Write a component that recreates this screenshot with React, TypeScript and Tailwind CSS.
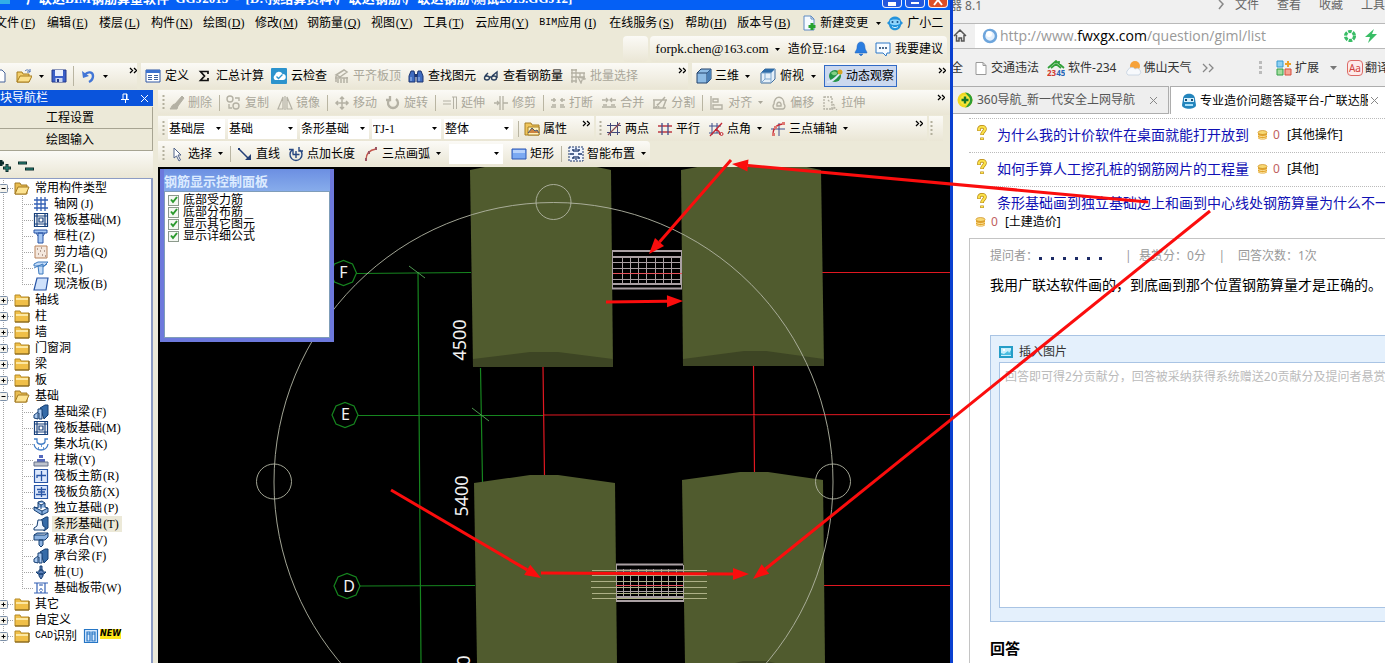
import React from "react";

type Kids = { children?: React.ReactNode };

const Svg = ({ children, w = 16, h = 16 }: Kids & { w?: number; h?: number }) => (
  <svg width={w} height={h} viewBox={`0 0 ${w} ${h}`} fill="none" className="shrink-0" aria-hidden="true">
    {children}
  </svg>
);

const Caret = ({ color = "#000" }: { color?: string }) => (
  <Svg w={5} h={3}>
    <path d="M0 0h5L2.500 3z" fill={color} />
  </Svg>
);

const More = () => (
  <button aria-label="更多" className="flex h-4 w-2 shrink-0 items-start">
    <Svg w={8} h={8}>
      <path d="M1 1l2.500 2.500L1 6M5 1l2.500 2.500L5 6" stroke="#000" strokeWidth="1.300" />
    </Svg>
  </button>
);

const Grip = () => (
  <Svg w={3} h={18}>
    <path d="M1.500 1v16" stroke="#b3b09d" strokeWidth="2" strokeDasharray="2 2" />
  </Svg>
);

const Sep = () => <span className="-ml-px -mr-0.5 h-4 w-px shrink-0 bg-[#b9b5a2]" />;

/* Leading Latin abbreviations (BIM, CAD) are set in the half-width face. */
const Label = ({ text }: { text: string }) => {
  const latin = text.match(/^[A-Z]+/)?.[0] ?? "";
  return (
    <>
      {latin && <span className="font-['Liberation_Mono'] text-[10px]">{latin}</span>}
      {text.slice(latin.length)}
    </>
  );
};

const G = "#b4b1a4";
const icons: Record<string, React.ReactNode> = {
  page: <path d="M-6 2h8l3 3v9h-11z" fill="#fff" stroke="#47639a" />,
  open: (
    <>
      <path d="M1 4h5l1 2h6v8H1z" fill="#f3cf6b" stroke="#a77d1d" />
      <path d="M4 8h12l-3 6H1z" fill="#fbe08c" stroke="#a77d1d" />
      <path d="M9 3c2-2 4-1 5 1m0-3v3h-3" stroke="#4a70b5" />
    </>
  ),
  save: (
    <>
      <path d="M1 2h14v12H1z" fill="#3a5fc8" stroke="#22388a" />
      <path d="M4 2h8v6H4z" fill="#e8eefb" />
      <path d="M4.500 10h7v4h-7z" fill="#c9d6f2" />
      <path d="M6 11h2v3H6z" fill="#22388a" />
    </>
  ),
  undo: (
    <>
      <path d="M4 6.500C7 3 12 4 12 8c0 3-2 5-4 6" stroke="#4376d6" strokeWidth="2.400" />
      <path d="M1 3l1 7 6-2z" fill="#4376d6" />
    </>
  ),
  define: (
    <>
      <path d="M1 2h14v12H1z" fill="#fff" stroke="#2f57a5" />
      <path d="M1 2h14v3H1z" fill="#3c72cf" />
      <path d="M3 7.500h4M3 9.500h4M3 11.500h4M9 7.500h4M9 9.500h4M9 11.500h4" stroke="#3c5f9d" />
    </>
  ),
  sum: <path d="M12 6V3.500H4.500L8.500 8l-4 4.500H12V10" stroke="#111" strokeWidth="1.700" />,
  cloud: (
    <>
      <rect width="16" height="16" rx="1" fill="#2c93cd" />
      <path d="M4 12a3 3 0 010-5 4 4 0 017.500-1A3 3 0 0112 12z" fill="#fff" />
      <path d="M5.500 8.500l2 2 4-4" stroke="#2c93cd" strokeWidth="1.300" />
    </>
  ),
  flush: <path d="M2 7l8-5 3 2-7 5zM2 8v6M4 11v4M7 11v4M10 10v5M13 9v6M1 10h13" stroke={G} strokeWidth="1.500" />,
  find: (
    <>
      <path d="M3 3h3l1 5v6H1V8zM10 3h3l2 5v6H9V8z" fill="#3f6cc0" stroke="#1c3570" />
      <path d="M6.500 6h3v3h-3z" fill="#1c3570" />
      <path d="M3 9v4M11 9v4" stroke="#a9c5f3" />
    </>
  ),
  glasses: <path d="M2 8l3-3M9 8l5-4v6M1.500 10a2.500 2 0 105 0 2.500 2 0 10-5 0zM8.500 10a2.500 2 0 105 0 2.500 2 0 10-5 0zM6 9h3" stroke="#29405f" strokeWidth="1.400" />,
  batch: <path d="M1 2h6M1 5h14M1 9h14M1 13h6M2 1v14M6 1v14M10 5v5M14 5v5M8 9l3 6 1-3 3-1z" stroke={G} strokeWidth="1.300" />,
  cube: (
    <>
      <path d="M1 5l4-4h10v10l-4 4H1z" fill="#8dbbe4" stroke="#22436c" />
      <path d="M1 5h10v10M11 5l4-4" stroke="#22436c" />
      <path d="M11 5l4-4v10l-4 4z" fill="#4b7fb4" />
    </>
  ),
  topview: (
    <>
      <path d="M1 5l4-4h10v10l-4 4H1z" fill="#e5f0f9" stroke="#3f6d9c" />
      <path d="M1 5l4-4h10l-4 4z" fill="#2e6da9" />
      <path d="M1 5h10v10M11 5l4-4M5 5v6h6M1 15l4-4" stroke="#7fa8cf" />
    </>
  ),
  orbit: (
    <>
      <circle cx="8" cy="8" r="6" fill="#239447" />
      <path d="M4 5c2-2 5-2 6 0s-4 4-6 0z" fill="#83d184" />
      <path d="M0 14C5 14 13 7 15 2" stroke="#dce9f6" strokeWidth="2" />
      <circle cx="13" cy="4" r="2.500" fill="#d6a527" />
    </>
  ),
  newdoc: (
    <>
      <path d="M3 1h7l3 3v11H3z" fill="#f5faff" stroke="#5f8ac2" />
      <path d="M10 1v3h3" stroke="#5f8ac2" />
      <path d="M11 8v7M7.500 11.500h7" stroke="#28a22e" strokeWidth="3" />
    </>
  ),
  mascot: (
    <>
      <path d="M2 6C3 0 13 0 14 6l2 2-2 2c-1 7-11 7-12 0L0 8z" fill="#2493dc" />
      <path d="M3 5.500C5 4 11 4 13 5.500v3c-2 2-8 2-10 0z" fill="#8fd4fb" />
      <circle cx="5.500" cy="7" r="1" fill="#104c86" />
      <circle cx="10.500" cy="7" r="1" fill="#104c86" />
      <path d="M5 11.500c2 1.500 4 1.500 6 0" stroke="#d8f2ff" />
    </>
  ),
  bell: <path d="M8 1c3 0 4 3 4 6 0 2 2 3 2 5H2c0-2 2-3 2-5 0-3 1-6 4-6zM6 13h4l-2 2z" fill="#2a7de0" stroke="#1c61bb" strokeWidth=".5" />,
  chat: (
    <>
      <path d="M1 2h14v10h-3l-1 3-3-3H1z" fill="#f6fbff" stroke="#2c79c8" />
      <path d="M4 7h2M7 7h2M10 7h2" stroke="#173e68" strokeWidth="1.500" />
    </>
  ),
  erase: <path d="M13 1l2 2-6 8-3-2zM6 9c-3 0-3 3-5 5h7l1-3" fill={G} stroke={G} />,
  copy: <path d="M1 4a3 3 0 106 0 3 3 0 10-6 0M7 11a3 3 0 106 0 3 3 0 10-6 0M9 3h4v3M3 9v4h3" stroke={G} strokeWidth="1.400" />,
  mirror: <path d="M6 2v12H1zM10 2v12h5zM8 1v14" stroke={G} strokeWidth="1.200" />,
  move: <path d="M8 2v12M2 8h12M6 4l2-2 2 2M6 12l2 2 2-2M4 6L2 8l2 2M12 6l2 2-2 2" stroke={G} strokeWidth="1.500" />,
  rotate: <path d="M5 4a5 5 0 106 0M5 1v4H1" stroke={G} strokeWidth="2.300" />,
  extend: <path d="M1 6h8M1 9h8M11.500 2v12M14.500 2v12M10 2h5" stroke={G} />,
  trim: <path d="M1 8h5M10 8h5M7 1v14M10 1v14M4 6l2 2-2 2" stroke={G} strokeWidth="1.300" />,
  split: <path d="M1 5h5M10 5h5M1 12h5M10 12h5M4 3v4M12 3v4M2 10h4M10 10h4" stroke={G} strokeWidth="1.500" />,
  merge: <path d="M1 5h6M9 5h6M1 12h14M5 3l2 2-2 2M11 3L9 5l2 2M2 10h4M10 10h4" stroke={G} strokeWidth="1.300" />,
  divide: <path d="M1 5h14M1 13h13M13 2L3 13M2 5v8M14 5l-3 8M5 9l2 3" stroke={G} strokeWidth="1.500" />,
  align: <path d="M2 1v14M4 4h5v3H4zM4 10h9v4H4z" stroke={G} strokeWidth="1.400" />,
  offset: <path d="M4 14a3 3 0 01-1-5c0-9 10-9 10 0a3 3 0 01-1 5zM6 11c-1-5 5-5 4 0z" stroke={G} strokeWidth="1.400" />,
  stretch: <path d="M2 2h8v12H2zM6 5l2 2M9 7l3 3v4H7M12 12l3 3" stroke={G} strokeDasharray="2 1" strokeWidth="1.300" />,
  props: (
    <>
      <path d="M1 2h6l1 2h7v10H1z" fill="#f1c65c" stroke="#a67e25" />
      <path d="M4 6h11v8H4z" fill="#fff2bc" stroke="#a67e25" />
      <path d="M4 12l4-5 3 3 2-1 2 3" fill="#ce8441" stroke="#465a75" />
    </>
  ),
  two: (
    <>
      <path d="M1 4.500h14M1 11.500h13M4.500 2v13M11.500 1v13" stroke="#41497c" />
      <path d="M2 14L14 2" stroke="#8b4a52" strokeWidth="1.300" />
    </>
  ),
  parallel: (
    <>
      <path d="M1 5h14M1 11h14" stroke="#bf3a43" strokeWidth="1.300" />
      <path d="M5 2v12M11 2v12" stroke="#3f4e8c" strokeWidth="1.300" />
    </>
  ),
  angle: (
    <>
      <path d="M1 5h12M1 12h11M4 2v12M9 2v10" stroke="#3f4e8c" />
      <path d="M2 15L14 2M7 9c3 0 5 2 5 5" stroke="#c42936" strokeWidth="1.300" />
      <circle cx="13.500" cy="13" r="1.500" stroke="#c42936" />
    </>
  ),
  aux: (
    <>
      <path d="M1 8h14M9 2v13" stroke="#3f4e8c" />
      <path d="M3 14C3 7 7 3 14 3" stroke="#c42936" strokeWidth="1.300" />
      <path d="M2 12h3v3H2zM4 5h3v3H4zM12 1h3v3h-3z" fill="#df7770" />
    </>
  ),
  cursor: <path d="M5 2v10l2.500-2L10 15l1.500-1L9 9h3z" fill="#fff" stroke="#51648b" />,
  line: (
    <>
      <path d="M2 3l10 10" stroke="#243f76" strokeWidth="1.500" />
      <path d="M1 2h2v2H1zM8 14h6V8z" fill="#243f76" />
    </>
  ),
  length: <path d="M4 4a6 6 0 108 0M1 3.500h4V8M8 5v7M4.500 8.500h7M11 1v4h4" stroke="#274781" strokeWidth="1.400" />,
  arc: (
    <>
      <path d="M3 14C3 8 6 4 13 3" stroke="#c3564b" strokeWidth="1.400" />
      <path d="M2 12h2v3H2zM5 5h2v3H5zM12 1h2v3h-2z" fill="#9b5664" />
    </>
  ),
  rect: (
    <>
      <path d="M1 3h14v10H1z" fill="#7ba9f2" stroke="#2d56b4" />
      <path d="M2 4h12v3H2z" fill="#b6d1fb" />
    </>
  ),
  smart: (
    <>
      <path d="M1 1h14v14H1z" fill="#eef4ff" stroke="#1c376c" strokeDasharray="2 1" />
      <path d="M8 2v4M8 10v4M2 8h4M10 8h4M4 4h2v2M12 4h-2v2M4 12h2v-2M12 12h-2v-2" stroke="#1c376c" strokeWidth="1.300" />
    </>
  ),
  folder: (
    <>
      <path d="M1 3h5l1 2h8v9H1z" fill="#f0bf48" stroke="#b58a27" />
      <path d="M2 6h12v2H2z" fill="#fce8a4" />
      <path d="M1 14h14V5" stroke="#7d5f1d" />
    </>
  ),
  folderOpen: (
    <>
      <path d="M1 3h5l1 2h6v9H1z" fill="#e9bd51" stroke="#a47b22" />
      <path d="M4 7h11l-3 7H1z" fill="#fde391" stroke="#a47b22" />
    </>
  ),
  grid: <path d="M4 1v14M8 1v14M12 1v14M1 4h14M1 8h12M1 12h14" stroke="#3460b4" strokeWidth="1.300" />,
  raft: <path d="M1.500 1.500h13v13h-13zM4 1v14M12 1v14M1 4h14M1 12h14M6 6h4v4H6z" stroke="#163f7b" strokeWidth="1.200" />,
  column: <path d="M1 2h13v3H1zM5 5h5v10H5zM3 5l2 3M12 5l-2 3" fill="#a7c8f4" stroke="#2855a6" />,
  wall: (
    <>
      <path d="M2 2h12v12H2z" fill="#f4e8de" stroke="#b8835c" />
      <path d="M4 5h1M8 4h1M11 7h1M5 10h1M9 11h1M7 7h1M12 12h1" stroke="#775544" />
    </>
  ),
  beam: <path d="M1 4l4-2h10l-4 4H1zM5 6l5-2v10H6zM10 7l4-3M1 8l4-2" fill="#c4dcf8" stroke="#3c7abf" />,
  slab: <path d="M4 2h11l-2 12H1z" fill="#cfe1fb" stroke="#2855a6" strokeWidth="1.200" />,
  strip: (
    <>
      <path d="M8 4l5-3h2v11l-4 3z" fill="#356ba8" stroke="#153e72" />
      <path d="M1 14h11v-3l-2-1-1-6H5l-1 6-3 2z" fill="#edf5ff" stroke="#153e72" />
    </>
  ),
  fbeam: (
    <>
      <path d="M7 4l5-3h3v10l-4 4z" fill="#356ba8" stroke="#153e72" />
      <path d="M1 14v-3l4-3V5h4v10H6V9H5v6z" fill="#a9c8ef" stroke="#153e72" />
    </>
  ),
  pit: <path d="M1 3h3v3c1 3 7 3 8 0V3h3M1 8c1 8 13 8 14 0M5 12h1M8 10h1M10 12h1" stroke="#417dc6" strokeWidth="1.300" />,
  pier: (
    <>
      <path d="M6 3h4v3H6zM4 7h8v3H4z" fill="#5569bd" />
      <path d="M1 10h14v4H1z" fill="#bfc4ce" stroke="#65718b" />
    </>
  ),
  main: (
    <>
      <path d="M1.500 1.500h13v13h-13z" fill="#dce8fc" stroke="#2855a6" strokeWidth="1.200" />
      <path d="M8.500 3v10M4 10V7.500h9" stroke="#2855a6" strokeWidth="1.300" />
    </>
  ),
  neg: (
    <>
      <path d="M1.500 1.500h13v13h-13z" fill="#dce8fc" stroke="#2855a6" strokeWidth="1.200" />
      <path d="M8.500 3v10M4 5.500h9M3 10.500h10M5 8h7" stroke="#2855a6" strokeWidth="1.300" />
    </>
  ),
  isolated: <path d="M5 2l4-1 3 2v4l3 1v4l-6 3-8-5V7l4 1zM5 3l3 2 4-2M8 5v4M1 7l8 4 6-3M9 11v4" fill="#8bb2e1" stroke="#153e72" />,
  cap: <path d="M1 3l3-2h11v4l-3 3H1zM1 3h11l3-2M6 8h4v5l-2 2-2-2z" fill="#8bb2e1" stroke="#153e72" />,
  pile: <path d="M7 2h2v4H7zM6 6h4v2h3l-2 2H5L3 8h3zM6 10h4v2l-2 3-2-3z" fill="#5f82ba" stroke="#153e72" />,
  band: <path d="M1 3h14M1 13h14M4 3v10M12 3v10M8 4v2M8 8v2M8 11v2M6 5h1M9 5h1M6 10h1M9 10h1" stroke="#3460b4" strokeWidth="1.200" />,
  cad: <path d="M1.500 1.500h13v13h-13zM4 4h3v9H4zM9 4h3v9H9zM4 6h3M9 6h3" fill="#dcecff" stroke="#2676c5" strokeWidth="1.200" />,
};

const Icon = ({ name }: { name: string }) => <Svg>{icons[name]}</Svg>;

const Tool = ({ icon, text, off, menu, gap = "gap-[3px]" }: { icon: string; text: string; off?: boolean; menu?: boolean; gap?: string }) => (
  <button className={`flex shrink-0 items-center whitespace-nowrap ${gap} ${off ? "text-[#aaa79a]" : "text-black"}`}>
    <Icon name={icon} />
    {text}
    {menu && (
      <span className="pl-[3px]">
        <Caret color={off ? "#aaa79a" : "#000"} />
      </span>
    )}
  </button>
);

const Combo = ({ label, value, width }: { label: string; value: string; width: string }) => (
  <span className={`relative flex h-5 shrink-0 items-center bg-white ${width}`}>
    <select aria-label={label} className="h-5 w-full appearance-none bg-transparent pl-px text-xs outline-none">
      <option>{value}</option>
    </select>
    <span className="pointer-events-none absolute right-1 top-2 flex">
      <Caret />
    </span>
  </span>
);

const band = "bg-linear-to-b from-[#fbfaf6] to-[#eae6d5]";

const menus: [string, string][] = [
  ["文件", "F"], ["编辑", "E"], ["楼层", "L"], ["构件", "N"], ["绘图", "D"], ["修改", "M"], ["钢筋量", "Q"],
  ["视图", "V"], ["工具", "T"], ["云应用", "Y"], ["BIM应用", "I"], ["在线服务", "S"], ["帮助", "H"], ["版本号", "B"],
];

const Menu = ({ text, k }: { text: string; k: string }) => (
  <button className="flex shrink-0 whitespace-nowrap">
    <Label text={text} />
    <span className="w-[18px] text-center">
      (<u>{k}</u>)
    </span>
  </button>
);

type Node = { text: string; icon: string; k?: string; open?: boolean; child?: boolean; last?: boolean; on?: boolean };
const tree: Node[] = [
  { text: "常用构件类型", icon: "folderOpen", open: true },
  { text: "轴网", k: "J", icon: "grid", child: true },
  { text: "筏板基础", k: "M", icon: "raft", child: true },
  { text: "框柱", k: "Z", icon: "column", child: true },
  { text: "剪力墙", k: "Q", icon: "wall", child: true },
  { text: "梁", k: "L", icon: "beam", child: true },
  { text: "现浇板", k: "B", icon: "slab", child: true, last: true },
  { text: "轴线", icon: "folder" },
  { text: "柱", icon: "folder" },
  { text: "墙", icon: "folder" },
  { text: "门窗洞", icon: "folder" },
  { text: "梁", icon: "folder" },
  { text: "板", icon: "folder" },
  { text: "基础", icon: "folderOpen", open: true },
  { text: "基础梁", k: "F", icon: "fbeam", child: true },
  { text: "筏板基础", k: "M", icon: "raft", child: true },
  { text: "集水坑", k: "K", icon: "pit", child: true },
  { text: "柱墩", k: "Y", icon: "pier", child: true },
  { text: "筏板主筋", k: "R", icon: "main", child: true },
  { text: "筏板负筋", k: "X", icon: "neg", child: true },
  { text: "独立基础", k: "P", icon: "isolated", child: true },
  { text: "条形基础", k: "T", icon: "strip", child: true, on: true },
  { text: "桩承台", k: "V", icon: "cap", child: true },
  { text: "承台梁", k: "F", icon: "fbeam", child: true },
  { text: "桩", k: "U", icon: "pile", child: true },
  { text: "基础板带", k: "W", icon: "band", child: true, last: true },
  { text: "其它", icon: "folder" },
  { text: "自定义", icon: "folder" },
  { text: "CAD识别", icon: "folder" },
];

const TreeRow = ({ n }: { n: Node }) => (
  <li className="flex h-4 items-center whitespace-nowrap">
    {n.child ? (
      <Svg w={33} h={16}>
        <path d={`M3.500 0v16M22.500 0v${n.last ? 8 : 16}M22 8.500h11`} stroke="#a5a5a5" strokeDasharray="1 1" />
      </Svg>
    ) : (
      <Svg w={14} h={16}>
        <path d="M3.500 0v16M8 8.500h6" stroke="#a5a5a5" strokeDasharray="1 1" />
        <rect x="-.5" y="4.500" width="8" height="8" rx="1" fill="#f5f3ec" stroke="#7b8fa8" />
        <path d={n.open ? "M1.500 8.500h4" : "M1.500 8.500h4M3.500 6.500v4"} stroke="#000" />
      </Svg>
    )}
    <Icon name={n.icon} />
    <span className={`ml-[3px] flex px-0.5 leading-4 ${n.on ? "bg-[#ece9d8]" : ""}`}>
      <Label text={n.text} />
      {n.k && <span className="w-[18px] text-center">({n.k})</span>}
    </span>
    {n.text === "CAD识别" && (
      <>
        <span className="w-1" />
        <Icon name="cad" />
        <b className="mb-1 ml-px h-[10px] bg-[#ffe81a] font-['DejaVu_Sans'] text-[8px] italic leading-[10px]">NEW</b>
      </>
    )}
  </li>
);

const Nav = () => (
  <aside className="flex w-[158px] shrink-0 flex-col overflow-hidden pr-[5px]">
    <header className="flex h-4 shrink-0 items-center bg-[#0a54dc] text-white">
      <span className="flex-1">块导航栏</span>
      <button aria-label="固定" className="mr-2.5">
        <Svg w={9} h={10}>
          <path d="M2 6V1h4v5M0 6.500h8M4.500 7v3M5.500 1v5" stroke="#fff" />
        </Svg>
      </button>
      <button aria-label="关闭" className="mr-1">
        <Svg w={9} h={9}>
          <path d="M1 1l7 7M8 1L1 8" stroke="#fff" />
        </Svg>
      </button>
    </header>
    <button className="mt-px h-[22px] shrink-0 border-b border-r border-[#a7a492] pr-3">工程设置</button>
    <button className="h-[22px] shrink-0 border-b border-r border-[#a7a492] pr-3">绘图输入</button>
    <div className={`flex h-[27px] shrink-0 items-center ${band}`}>
      <Svg w={36} h={16}>
        <path d="M-2 6h6M1 3v6M3 11h8M7 7v8M18 6h9M25 12h9" stroke="#0c2c2c" strokeWidth="3" />
        <path d="M4 11h6M7 8v6M26 12h7M19 6h7" stroke="#2c9384" />
      </Svg>
    </div>
    <ul className="min-h-0 flex-1 overflow-hidden border-r-2 border-t border-[#8d9cc4] bg-white pt-px">
      {tree.map((n, i) => (
        <TreeRow key={i} n={n} />
      ))}
    </ul>
  </aside>
);

const Scene = () => (
  <svg viewBox="158 167 792 496" preserveAspectRatio="xMidYMid slice" className="h-full w-full" fill="none">
    <g stroke="#16851f" strokeWidth="1.200">
      <path d="M356 273.500L471 272.500M358 415.500H543M359 586L475 585.500M418 272L421 663M480.500 368L482.500 482" />
      <path d="M409 266l16 12M472 408l17 13" stroke="#4e9950" strokeWidth="1" />
      {[[343.5, 273], [345, 415], [347, 586]].map(([x, y]) => (
        <polygon key={y} points={`${x - 13},${y} ${x - 9},${y - 9} ${x},${y - 12.5} ${x + 9},${y - 9} ${x + 13},${y} ${x + 9},${y + 9} ${x},${y + 12.5} ${x - 9},${y + 9}`} />
      ))}
    </g>
    <path d="M822 272.500H950M543 415L950 414.500M824 585.500H950M543 367L544.500 476M753.500 366L754.500 473" stroke="#e01821" strokeWidth="1.200" />
    <g fill="#505b2e">
      <path d="M470 170l20-4h102l19 4 2 197H473z" />
      <path d="M681 170l22-4h99l19 4 3 196H683z" />
      <path d="M474 483l56-8h28l57 8 2 180H477z" />
      <path d="M682 480l58-8h28l55 8 2 183H685z" />
    </g>
    <path d="M473 359l57-7h28l55 7v8H473zM683 359l61-8h22l58 8v7H683zM735 663l8-2h24l8 2z" fill="#3d4524" />
    <g stroke="#aaa0a3">
      <path d="M612 251h70M613 257h69M612 284h70M612 288.500h70" strokeWidth="2" />
      <path d="M612.500 251v38M681.500 251v38M613 262.500h69M613 268.500h69M613 279.500h69M622.500 257v28M630.500 257v28M638.500 257v28M646.500 257v28M655.500 257v28M663.500 257v28M671.500 257v28M680.500 257v28" />
      <path d="M616 564.500h67M616 570.500h67M616 597h67M616 601h68" strokeWidth="2" />
      <path d="M616 581.500h68M616 591.500h68M616.500 565v36M623.500 569v29M630.500 569v29M638.500 569v29M646.500 569v29M653.500 569v29M661.500 569v29M668.500 569v29M676.500 569v29M683.500 565v36" />
    </g>
    <path d="M613 273.500h69M616 585.500h67" stroke="#e8515a" />
    <path d="M592 570.500h115M592 575.500h115M591 581.500h116M591 587.500h116M592 593.500h115M592 598.500h115" stroke="#aeb187" />
    <g stroke="#b2b5a4" strokeWidth=".9">
      <circle cx="553.5" cy="482" r="279.5" />
      <circle cx="553.5" cy="202" r="17.500" />
      <circle cx="274" cy="481.5" r="17.500" />
      <circle cx="833" cy="481.5" r="17.500" />
    </g>
    <g fill="#f2f2f2" className="font-['Noto_Sans'] text-[16px]" textAnchor="middle">
      <text x="343.500" y="278">F</text>
      <text x="345.500" y="420">E</text>
      <text x="349" y="592">D</text>
    </g>
    <g fill="#f2f2f2" className="font-['Noto_Sans'] text-[18px]" textAnchor="middle">
      <text transform="translate(466 340) rotate(-90)">4500</text>
      <text transform="translate(468 496) rotate(-90)">5400</text>
      <text transform="translate(470 676) rotate(-90)">3000</text>
    </g>
  </svg>
);

const RebarPanel = () => (
  <section className="absolute left-0.5 top-0.5 flex h-[173px] w-[174px] flex-col border-4 border-t-0 border-[#6d79dc] bg-[#7c9fe6]">
    <h2 className="h-[22px] shrink-0 bg-linear-to-b from-[#6c8fe2] to-[#87aceb] text-[13px] font-bold leading-[25px] text-[#dcebff]">钢筋显示控制面板</h2>
    <div className="flex-1 border border-[#7f9db9] bg-white pl-[3px] pt-0.5">
      {["底部受力筋", "底部分布筋", "显示其它图元", "显示详细公式"].map((t) => (
        <label key={t} className="relative flex h-3 items-center gap-1 leading-3">
          <input type="checkbox" defaultChecked className="h-[11px] w-[11px] appearance-none border border-[#8c9a8c] bg-[#f4f8f2]" />
          <span className="pointer-events-none absolute left-0.5 top-0.5 flex">
            <Svg w={8} h={8}>
              <path d="M1 3.500L3 6l4-5" stroke="#2b9a2d" strokeWidth="2" />
            </Svg>
          </span>
          {t}
        </label>
      ))}
    </div>
  </section>
);

const winBtn = "flex h-2 w-5 justify-center rounded-b-[4px] border border-t-0 border-white/90";

const CadApp = () => (
  <section className="flex min-w-0 flex-col overflow-hidden border-r-[3px] border-[#0a40d0] bg-[#ece9d8]">
    <header className="flex h-2.5 shrink-0 items-end overflow-hidden bg-[#0560f5] text-white">
      <Svg w={12} h={10}>
        <path d="M-2 -2h12v6H-2z" fill="#31aee8" />
      </Svg>
      <h1 className="ml-3.5 flex-1 whitespace-pre pb-1 text-[13px] font-bold leading-[14px]">
        {"广联达BIM钢筋算量软件  GGJ2013  -  [D:\\预结算资料\\广联达钢筋\\广联达钢筋\\测试2013.GGJ12]"}
      </h1>
      <div className="flex h-full items-start gap-[3px] pr-0.5">
        <button aria-label="最小化" className={`${winBtn} bg-[#2458dc]`}>
          <span className="mt-0.5 h-1 w-2 bg-white" />
        </button>
        <button aria-label="最大化" className={`${winBtn} bg-[#2458dc]`}>
          <span className="h-1 w-2 border-b-2 border-white" />
        </button>
        <button aria-label="关闭窗口" className={`${winBtn} bg-[#dd4f27]`}>
          <Svg w={10} h={6}>
            <path d="M5 0L1 5M5 0l4 5" stroke="#fff" strokeWidth="2" />
          </Svg>
        </button>
      </div>
    </header>

    <nav className="-ml-[5px] flex h-[26px] shrink-0 items-center gap-2.5">
      {menus.map(([t, k]) => (
        <Menu key={t} text={t} k={k} />
      ))}
      <button className="flex shrink-0 items-center gap-[3px]">
        <Icon name="newdoc" />
        新建变更
        <span className="pl-[5px]"><Caret /></span>
      </button>
      <button className="-ml-1 flex shrink-0 items-center gap-1">
        <Icon name="mascot" />
        广小二
      </button>
    </nav>

    <div className="flex h-[26px] shrink-0 justify-end gap-0.5 pr-[3px]">
      <span className={`w-[25px] rounded-sm ${band}`} />
      <div className={`flex items-center rounded-sm pl-1.5 pr-1 ${band}`}>
        <button className="flex items-center gap-1.5">
          <span className="font-['Liberation_Serif'] text-[13px]">forpk.chen@163.com</span>
          <Caret />
        </button>
        <span className="ml-2 whitespace-nowrap">造价豆:164</span>
        <button aria-label="通知" className="ml-2"><Icon name="bell" /></button>
        <button className="ml-1.5 flex items-center gap-1 whitespace-nowrap">
          <Icon name="chat" />
          我要建议
        </button>
      </div>
    </div>

    <div className="flex h-7 shrink-0 gap-1 pb-px pt-px">
      <div className={`flex w-[137px] shrink-0 items-center ${band}`}>
        <button aria-label="新建"><Svg w={8} h={16}>{icons.page}</Svg></button>
        <button aria-label="打开" className="ml-2 flex items-center gap-[7px]"><Icon name="open" /><Caret /></button>
        <button aria-label="保存" className="ml-[7px]"><Icon name="save" /></button>
        <span className="ml-1.5 h-5 w-px bg-[#b9b5a2]" />
        <button aria-label="撤销" className="ml-[7px] flex items-center gap-[6px]"><Icon name="undo" /><Caret /></button>
        <span className="ml-auto pb-0.5"><More /></span>
      </div>
      <div className={`flex min-w-0 flex-1 items-center gap-[7px] overflow-hidden pl-1 ${band}`}>
        <Tool icon="define" text="定义" gap="gap-1" />
        <Tool icon="sum" text="汇总计算" gap="gap-1" />
        <Tool icon="cloud" text="云检查" gap="gap-1" />
        <Tool icon="flush" text="平齐板顶" off />
        <Tool icon="find" text="查找图元" gap="gap-1" />
        <Tool icon="glasses" text="查看钢筋量" gap="gap-1" />
        <Tool icon="batch" text="批量选择" off gap="gap-1" />
        <span className="ml-auto pb-0.5 pr-0.5"><More /></span>
      </div>
      <div className={`flex w-[258px] shrink-0 items-center gap-2.5 pl-1 ${band}`}>
        <Tool icon="cube" text="三维" menu />
        <Tool icon="topview" text="俯视" menu gap="gap-1" />
        <button className="-ml-0.5 flex h-[22px] items-center gap-[3px] whitespace-nowrap border border-[#316ac5] bg-[#cbd8ef] px-0.5">
          <Icon name="orbit" />
          动态观察
        </button>
        <span className="ml-auto pb-0.5 pr-1"><More /></span>
      </div>
    </div>

    <div className="flex min-h-0 flex-1">
      <Nav />
      <main className="flex min-w-0 flex-1 flex-col">
        <div className={`flex h-[25px] shrink-0 items-center gap-2 overflow-hidden pl-1 ${band}`}>
          <span className="-mr-1 flex"><Grip /></span>
          <Tool icon="erase" text="删除" off />
          <Sep />
          <Tool icon="copy" text="复制" off />
          <Tool icon="mirror" text="镜像" off />
          <Sep />
          <Tool icon="move" text="移动" off />
          <Tool icon="rotate" text="旋转" off />
          <Sep />
          <Tool icon="extend" text="延伸" off />
          <Tool icon="trim" text="修剪" off />
          <Sep />
          <Tool icon="split" text="打断" off />
          <Tool icon="merge" text="合并" off />
          <Tool icon="divide" text="分割" off />
          <Sep />
          <Tool icon="align" text="对齐" off menu />
          <Tool icon="offset" text="偏移" off />
          <Tool icon="stretch" text="拉伸" off />
          <span className="ml-auto pb-0.5 pr-[5px]"><More /></span>
        </div>
        <div className="flex h-[26px] shrink-0 gap-0.5 pt-px">
          <div className={`flex w-[436px] shrink-0 items-center gap-[3px] pl-1 ${band}`}>
            <Grip />
            <Combo label="楼层" value="基础层" width="w-[57px]" />
            <Combo label="构件大类" value="基础" width="w-[69px]" />
            <Combo label="构件类型" value="条形基础" width="w-[69px]" />
            <Combo label="构件" value="TJ-1" width="w-[69px]" />
            <Combo label="部位" value="整体" width="w-[69px]" />
            <span className="mx-0.5 h-4 w-px bg-[#b9b5a2]" />
            <Tool icon="props" text="属性" />
            <span className="ml-auto pb-0.5 pr-1"><More /></span>
          </div>
          <div className={`flex min-w-0 flex-1 items-center gap-2 pl-[3px] ${band}`}>
            <span className="-mr-1 flex"><Grip /></span>
            <Tool icon="two" text="两点" />
            <Tool icon="parallel" text="平行" />
            <Tool icon="angle" text="点角" menu />
            <Tool icon="aux" text="三点辅轴" menu />
            <span className="ml-auto pb-0.5 pr-1"><More /></span>
          </div>
          <div className={`mr-[7px] flex w-[14px] shrink-0 items-center pl-px ${band}`}>
            <Grip />
          </div>
        </div>
        <div className="flex h-[26px] shrink-0 pb-px">
          <div className={`flex items-center gap-2 rounded-r pl-1 pr-1 ${band}`}>
            <span className="-mr-1 flex"><Grip /></span>
            <Tool icon="cursor" text="选择" menu />
            <Sep />
            <Tool icon="line" text="直线" />
            <Tool icon="length" text="点加长度" />
            <Tool icon="arc" text="三点画弧" menu />
            <Combo label="绘图方式" value="" width="w-[54px]" />
            <Tool icon="rect" text="矩形" />
            <Sep />
            <Tool icon="smart" text="智能布置" menu />
          </div>
        </div>
        <div className="relative min-h-0 flex-1 overflow-hidden bg-black">
          <Scene />
          <RebarPanel />
        </div>
      </main>
    </div>
  </section>
);

const Coin = () => (
  <Svg w={11} h={10}>
    <path d="M1 3v5c1 2 8 2 9 0V3z" fill="#e2a32b" />
    <ellipse cx="5.500" cy="2.500" rx="4.500" ry="2" fill="#f8d873" stroke="#cb8d20" strokeWidth=".7" />
    <path d="M1 5c1 2 8 2 9 0M1 7c1 2 8 2 9 0" stroke="#fae09a" />
  </Svg>
);

const Reward = ({ tag }: { tag: string }) => (
  <span className="flex h-5 shrink-0 items-center gap-[5px] whitespace-nowrap text-xs">
    <Coin />
    <span className="text-[#c06060]">0</span>
    <span className="ml-0.5">[{tag}]</span>
  </span>
);

const Question = ({ text, tag }: { text: string; tag?: string }) => (
  <div className={`flex items-start overflow-hidden border-t border-dotted border-[#bbb] pl-2 pt-1.5 ${tag ? "h-[34px]" : "h-[26px]"}`}>
    <Svg w={10} h={16}>
      <path d="M2 6V4c0-3 6-3 6 0 0 2-3 3-3 6M5 12.500v2.500" stroke="#b98b14" strokeWidth="3.600" />
      <path d="M2 5.500V4c0-3 6-3 6 0 0 2-3 3-3 5.500M5 13v1.500" stroke="#fbe14a" strokeWidth="2.200" />
    </Svg>
    <a href="#question" className="ml-2.5 mr-2 shrink-0 whitespace-nowrap text-[14px] leading-5 text-[#1010b4]">{text}</a>
    {tag && <Reward tag={tag} />}
  </div>
);

const Browser = () => (
  <section className="flex min-w-0 flex-col overflow-hidden bg-white font-['Noto_Sans','Noto_Sans_CJK_SC',sans-serif] text-[#333]">
    <header className="flex h-[23px] shrink-0 items-start bg-[#f0f0f0] text-[#666]">
      <span className="-ml-[3px] flex-1 whitespace-nowrap leading-3">器 8.1</span>
      <span className="flex shrink-0 items-start gap-[18px] leading-[10px]">
        <Svg w={8} h={10}><path d="M2 0l4 4-4 5" stroke="#888" strokeWidth="1.500" /></Svg>
        <button className="-ml-2">文件</button>
        <button>查看</button>
        <button>收藏</button>
        <button>工具</button>
      </span>
    </header>
    <div className="flex h-[26px] shrink-0 items-center border-y border-[#b9b9b9] bg-[#f0f0f0]">
      <button aria-label="主页" className="mr-1.5">
        <Svg><path d="M1 8l6-6 6 6M3.500 7v6h2.500v-3h2.500v3h2.500V7" stroke="#555" strokeWidth="1.500" /></Svg>
      </button>
      <div className="flex h-full min-w-0 flex-1 items-center bg-white pl-[7px]">
        <Svg>
          <circle cx="8" cy="8" r="6" fill="#e4f0fd" stroke="#6da5dc" strokeWidth="2.500" />
          <circle cx="7" cy="6" r="3" fill="#fff" />
        </Svg>
        <span className="ml-0.5 min-w-0 flex-1 whitespace-nowrap font-['Open_Sans'] text-[14px] text-[#999]">
          http://www.<span className="text-black">fwxgx.com</span>/question/giml/list
        </span>
        <button aria-label="模式" className="mr-2">
          <Svg w={14}>
            <circle cx="7" cy="8" r="4.500" stroke="#38bd65" strokeWidth="3.200" strokeDasharray="3.600 1.100" />
          </Svg>
        </button>
        <button aria-label="加速" className="mr-2">
          <Svg w={12}><path d="M9 1L0 9h5l-2 6 9-9H7z" fill="#38bd65" /></Svg>
        </button>
      </div>
    </div>
    <nav className="flex h-[37px] shrink-0 items-center whitespace-nowrap bg-[#f0f0f0]">
      <span className="-ml-0.5">全</span>
      <button className="ml-3 flex items-center gap-1">
        <Svg w={12}><path d="M1 2.500h7l3 3v9H1zM8 2.500v3h3" stroke="#999" fill="#fff" /></Svg>
        交通违法
      </button>
      <button className="ml-2 flex items-center gap-[3px]">
        <Svg w={18}>
          <path d="M1 8l8-7 8 7M4 8l5-4 5 4M12 1v3" stroke="#31a03a" strokeWidth="1.700" />
          <text x="0" y="15.500" className="text-[8px] font-bold" fill="#d13a2f">23<tspan fill="#2466b8">45</tspan></text>
        </Svg>
        软件-234
      </button>
      <button className="ml-2 flex items-center gap-0.5">
        <Svg w={17}>
          <circle cx="10" cy="6" r="5" fill="#f6a23a" />
          <path d="M3 15a3 3 0 010-5 4 4 0 017-1 3 3 0 014 6z" fill="#f7f9fc" stroke="#bccbdd" strokeWidth=".7" />
        </Svg>
        佛山天气
      </button>
      <button aria-label="更多收藏" className="ml-2.5">
        <Svg w={13}><path d="M1 4l4 4-4 4M7 4l4 4-4 4" stroke="#888" strokeWidth="1.300" /></Svg>
      </button>
      <span className="ml-auto flex">
        <Svg w={3} h={14}><path d="M1.500 0v14" stroke="#bbb" strokeWidth="3" strokeDasharray="3 2" /></Svg>
      </span>
      <button className="ml-3.5 flex items-center gap-[3px]">
        <Svg>
          <path d="M1 1h6v6H1z" fill="#8ed0f3" stroke="#3299d0" />
          <path d="M1 9h6v6H1z" fill="#a4dc9e" stroke="#32a046" />
          <path d="M9 9h6v6H9z" fill="#f5a697" stroke="#d74a38" />
          <path d="M12 1v6M9 4h6" stroke="#eda229" strokeWidth="2" />
        </Svg>
        扩展
        <span className="pl-2"><Svg w={7} h={4}><path d="M0 0h7L3.500 4z" fill="#777" /></Svg></span>
      </button>
      <button className="-mr-1 ml-2.5 flex items-center gap-0.5">
        <span className="flex h-4 w-4 items-center justify-center rounded-sm border border-[#dc6a66] bg-[#fdeaea] text-[10px] text-[#d0413c]">Aa</span>
        翻译
      </button>
    </nav>
    <div className="flex h-7 shrink-0 bg-[#f0f0f0]" role="tablist">
      <div role="tab" className="flex w-1/2 shrink-0 items-center border border-l-0 border-[#adadad] bg-[#eee] pl-1 text-[#555]">
        <Svg>
          <circle cx="8" cy="8" r="7.500" fill="#f0d823" />
          <path d="M8 .5a7.500 7.500 0 010 15c5-3 5-11 0-15z" fill="#2d9e35" />
          <circle cx="8" cy="8" r="5" fill="#f8e93d" />
          <path d="M8 4.500v7M4.500 8h7" stroke="#147529" strokeWidth="2.400" />
        </Svg>
        <span className="ml-1 min-w-0 flex-1 overflow-hidden whitespace-nowrap">360导航_新一代安全上网导航</span>
        <button aria-label="关闭标签" className="mr-2.5"><Svg w={9} h={9}><path d="M1 1l7 7M8 1L1 8" stroke="#888" /></Svg></button>
      </div>
      <div role="tab" aria-selected="true" className="ml-px flex min-w-0 flex-1 items-center border-l border-t border-[#adadad] bg-white pl-2.5 text-black">
        <Svg>
          <path d="M2 6c0-7 12-7 12 0l1 6c0 5-14 5-14 0z" fill="#2485bd" />
          <path d="M3 5h10v4H3z" fill="#d5effc" />
          <path d="M4 12h8" stroke="#a8e0fb" strokeWidth="2" />
          <path d="M5 6v2M11 6v2" stroke="#1a4c71" strokeWidth="2" />
        </Svg>
        <span className="ml-[3px] min-w-0 flex-1 overflow-hidden whitespace-nowrap">专业造价问题答疑平台-广联达服</span>
        <button aria-label="关闭标签" className="mx-1.5 ml-0.5"><Svg w={9} h={9}><path d="M1 1l7 7M8 1L1 8" stroke="#888" /></Svg></button>
      </div>
    </div>
    <main className="flex min-h-0 flex-1 flex-col overflow-hidden pl-4 pt-1 text-black">
      <Question text="为什么我的计价软件在桌面就能打开放到" tag="其他操作" />
      <Question text="如何手算人工挖孔桩的钢筋网片的工程量" tag="其他" />
      <Question text="条形基础画到独立基础边上和画到中心线处钢筋算量为什么不一样" />
      <div className="h-[26px] shrink-0 pl-1.5"><Reward tag="土建造价" /></div>
      <article className="flex min-h-0 flex-1 flex-col border-l border-t border-[#c4c4c4] pl-5">
        <p className="flex h-[34px] shrink-0 items-center whitespace-nowrap text-[#999]">
          <span>提问者：</span>
          <a href="#user" className="flex h-2 w-[87px] items-end gap-[9px] pl-px" aria-label="提问者主页">
            {[0, 1, 2, 3, 4, 5].map((i) => (
              <span key={i} className="h-[3px] w-[3px] bg-[#1d2b66]" />
            ))}
          </a>
          <span className="w-3.5">|</span>
          <span>悬赏分：0分</span>
          <span className="w-8 text-center">|</span>
          <span>回答次数：1次</span>
        </p>
        <p className="h-[62px] shrink-0 whitespace-nowrap pt-1 text-[14px]">我用广联达软件画的，到底画到那个位置钢筋算量才是正确的。</p>
        <div className="flex h-[287px] shrink-0 flex-col border border-r-0 border-[#a9c4e4] bg-[#e4f0fc] pb-[13px] pl-2">
          <button className="flex h-[26px] shrink-0 items-center gap-1.5 pt-1.5 text-[#333]">
            <Svg w={14} h={12}>
              <rect x="1" y="1" width="12" height="10" fill="#c9effc" stroke="#259dc7" strokeWidth="2" />
              <path d="M2 9V7l3 1 4-3 1 2 2-3v5z" fill="#4bbde0" />
              <path d="M4 3h2v2H4z" fill="#fff" />
            </Svg>
            插入图片
          </button>
          <textarea aria-label="回答" placeholder="回答即可得2分贡献分，回答被采纳获得系统赠送20贡献分及提问者悬赏分" className="-mr-6 min-h-0 flex-1 resize-none overflow-hidden whitespace-nowrap border border-[#a9c4e4] bg-white px-[5px] pt-1.5 text-xs outline-none placeholder:text-[#bbb]" />
        </div>
        <h2 className="pt-3.5 text-[15px] font-bold leading-6">回答</h2>
      </article>
    </main>
  </section>
);

const arrows = [
  [1148, 202, 732, 164],
  [731, 160, 649, 254],
  [606, 302, 683, 301],
  [1210, 211, 753, 579],
  [391, 490, 541, 578],
  [541, 573, 749, 574],
];

const Arrows = () => (
  <svg viewBox="0 0 1385 663" preserveAspectRatio="none" className="pointer-events-none absolute inset-0 h-full w-full" aria-hidden="true">
    {arrows.map(([x1, y1, x2, y2], i) => {
      const a = Math.atan2(y2 - y1, x2 - x1);
      const bx = x2 - 16 * Math.cos(a);
      const by = y2 - 16 * Math.sin(a);
      const dx = 6 * Math.sin(a);
      const dy = 6 * Math.cos(a);
      return (
        <g key={i} fill="#fb0d0d" stroke="#fb0d0d">
          <path d={`M${x1} ${y1}L${bx} ${by}`} strokeWidth="3" />
          <path d={`M${x2} ${y2}L${bx + dx} ${by - dy}L${bx - dx} ${by + dy}z`} stroke="none" />
        </g>
      );
    })}
  </svg>
);

export default function App() {
  return (
    <div className="relative grid h-screen grid-cols-[minmax(0,953fr)_minmax(0,432fr)] overflow-hidden font-['Liberation_Serif','Noto_Sans_CJK_SC',sans-serif] text-xs leading-4 text-black">
      <CadApp />
      <Browser />
      <Arrows />
    </div>
  );
}
